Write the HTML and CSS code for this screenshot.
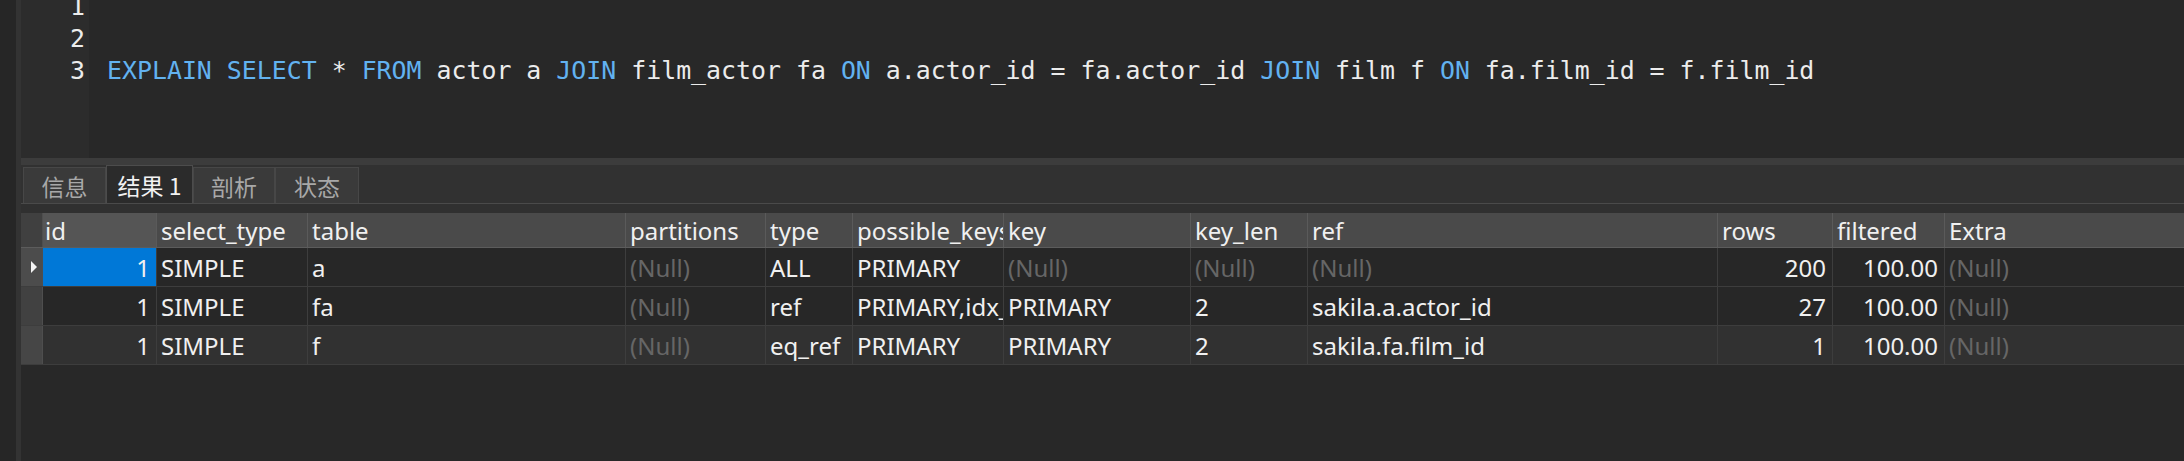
FILE: index.html
```html
<!DOCTYPE html>
<html lang="zh">
<head>
<meta charset="utf-8">
<title>EXPLAIN</title>
<link rel="stylesheet" href="styles.css">
</head>
<body>
<div class="app">
  <div class="edge"></div>
  <div class="bar"></div>
  <div class="main">
    <div class="editor">
      <div class="gutter">
        <div class="ln">1</div>
        <div class="ln">2</div>
        <div class="ln">3</div>
      </div>
      <div class="code">
        <div class="line">&nbsp;</div>
        <div class="line">&nbsp;</div>
        <div class="line"><span class="kw">EXPLAIN</span> <span class="kw">SELECT</span> * <span class="kw">FROM</span> actor a <span class="kw">JOIN</span> film_actor fa <span class="kw">ON</span> a.actor_id = fa.actor_id <span class="kw">JOIN</span> film f <span class="kw">ON</span> fa.film_id = f.film_id</div>
      </div>
    </div>
    <div class="splitter"></div>
    <div class="tabbar">
      <div class="tab">信息</div>
      <div class="tab active">结果 1</div>
      <div class="tab">剖析</div>
      <div class="tab">状态</div>
    </div>
    <div class="spacer"></div>
    <div class="grid">
      <div class="row head">
        <div class="c ind"></div>
        <div class="c sel">id</div>
        <div class="c">select_type</div>
        <div class="c">table</div>
        <div class="c">partitions</div>
        <div class="c">type</div>
        <div class="c">possible_keys</div>
        <div class="c">key</div>
        <div class="c">key_len</div>
        <div class="c">ref</div>
        <div class="c">rows</div>
        <div class="c">filtered</div>
        <div class="c last">Extra</div>
      </div>
      <div class="row dark">
        <div class="c ind cur"><span class="tri"></span></div>
        <div class="c num focus">1</div>
        <div class="c">SIMPLE</div>
        <div class="c">a</div>
        <div class="c null">(Null)</div>
        <div class="c">ALL</div>
        <div class="c">PRIMARY</div>
        <div class="c null">(Null)</div>
        <div class="c null">(Null)</div>
        <div class="c null">(Null)</div>
        <div class="c num">200</div>
        <div class="c num">100.00</div>
        <div class="c null last">(Null)</div>
      </div>
      <div class="row dark">
        <div class="c ind"></div>
        <div class="c num">1</div>
        <div class="c">SIMPLE</div>
        <div class="c">fa</div>
        <div class="c null">(Null)</div>
        <div class="c">ref</div>
        <div class="c">PRIMARY,idx_fk_film_id</div>
        <div class="c">PRIMARY</div>
        <div class="c">2</div>
        <div class="c">sakila.a.actor_id</div>
        <div class="c num">27</div>
        <div class="c num">100.00</div>
        <div class="c null last">(Null)</div>
      </div>
      <div class="row light">
        <div class="c ind alt"></div>
        <div class="c num">1</div>
        <div class="c">SIMPLE</div>
        <div class="c">f</div>
        <div class="c null">(Null)</div>
        <div class="c">eq_ref</div>
        <div class="c">PRIMARY</div>
        <div class="c">PRIMARY</div>
        <div class="c">2</div>
        <div class="c">sakila.fa.film_id</div>
        <div class="c num">1</div>
        <div class="c num">100.00</div>
        <div class="c null last">(Null)</div>
      </div>
    </div>
    <div class="empty"></div>
  </div>
</div>
</body>
</html>
```
FILE: styles.css
```css
* { box-sizing: border-box; }
html, body {
  margin: 0;
  padding: 0;
  width: 2184px;
  height: 461px;
  overflow: hidden;
  background: #262626;
}
.app {
  display: flex;
  height: 461px;
}
.edge {
  width: 16px;
  background: #262626;
  flex: none;
}
.bar {
  width: 5px;
  background: #333333;
  flex: none;
}
.main {
  flex: 1;
  display: flex;
  flex-direction: column;
  min-width: 0;
  background: #282828;
}
.editor {
  height: 158px;
  flex: none;
  display: flex;
  overflow: hidden;
  background: #282828;
  font-family: "DejaVu Sans Mono", monospace;
  font-size: 24.88px;
  line-height: 32px;
  color: #ececec;
}
.gutter {
  width: 68px;
  flex: none;
  background: #2c2c2c;
  padding-right: 4px;
  text-align: right;
}
.gutter .ln:first-child,
.code .line:first-child {
  margin-top: -9px;
}
.code {
  flex: 1;
  padding-left: 18px;
}
.line { white-space: pre; }
.kw { color: #62b2f0; }
.splitter {
  height: 7px;
  flex: none;
  background: #3c3c3c;
}
.tabbar {
  height: 39px;
  flex: none;
  display: flex;
  align-items: flex-end;
  padding-left: 2px;
  background: #313131;
  border-bottom: 1px solid #4a4a4a;
  font-family: "Noto Sans CJK SC", "Noto Sans", sans-serif;
  font-size: 23px;
}
.tab {
  height: 36px;
  display: flex;
  align-items: center;
  justify-content: center;
  background: #3a3a3a;
  border: 1px solid #474747;
  border-bottom: none;
  color: #a8a8a8;
  width: 83px;
}
.tab:nth-child(3) { width: 82px; }
.tab:nth-child(4) { width: 84px; }
.tab.active {
  height: 38px;
  width: 87px;
  background: #2b2b2b;
  border-color: #4c4c4c;
  color: #f2f2f2;
}
.spacer {
  height: 9px;
  flex: none;
  background: #303030;
}
.grid {
  flex: none;
  font-family: "Noto Sans", "Open Sans", sans-serif;
  font-size: 24px;
  color: #f0f0f0;
}
.row {
  display: grid;
  grid-template-columns: 22px 114px 151px 318px 140px 87px 151px 187px 117px 410px 115px 112px 1fr;
  height: 39px;
  border-bottom: 1px solid #3d3d3d;
}
.row.head {
  height: 35px;
  background: #4a4a4a;
  border-bottom: 1px solid #5c5c5c;
}
.row.dark { background: #272727; }
.row.light { background: #313131; }
.c {
  border-right: 1px solid #3d3d3d;
  padding-left: 4px;
  white-space: nowrap;
  overflow: hidden;
  display: flex;
  align-items: center;
}
.head .c { border-right-color: #5a5a5a; }
.head .c.sel { background: #555555; padding-left: 2px; }
.c.last { border-right: none; }
.c.num {
  justify-content: flex-end;
  padding-left: 0;
  padding-right: 6px;
}
.c.null { color: #666666; }
.c.focus { background: #0078d7; }
.c.ind {
  background: #414141;
  border-right: 1px solid #4e4e4e;
  padding: 0;
  justify-content: center;
}
.head .c.ind { background: #404040; }
.c.ind.cur { background: #4c4c4c; }
.c.ind.alt { background: #464646; }
.tri {
  width: 0;
  height: 0;
  border-top: 6px solid transparent;
  border-bottom: 6px solid transparent;
  border-left: 6px solid #f4f4f4;
  margin-left: 4px;
}
.empty {
  flex: 1;
  background: #282828;
}
```
